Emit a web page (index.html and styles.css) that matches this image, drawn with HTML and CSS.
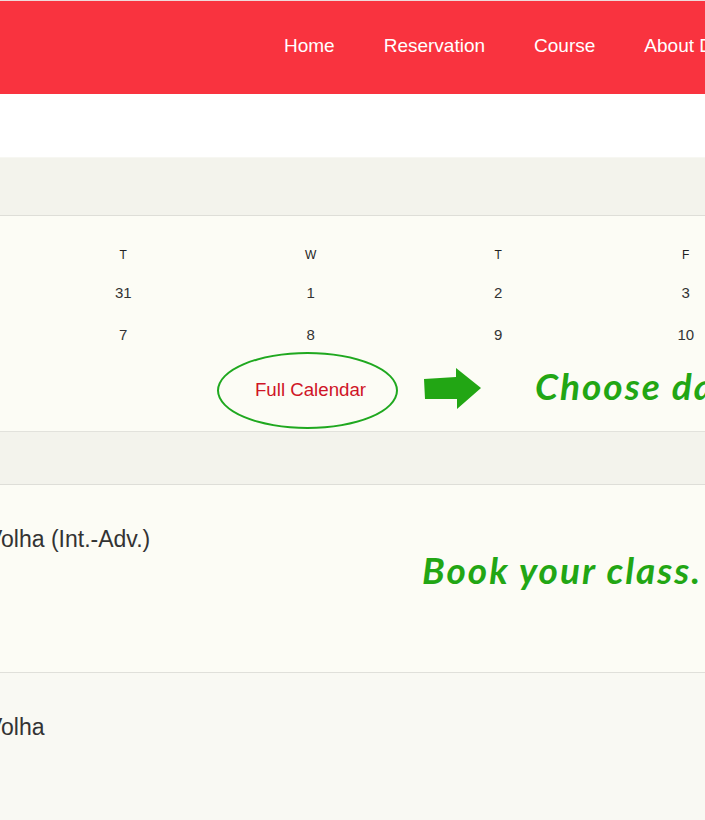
FILE: index.html
```html
<!DOCTYPE html>
<html lang="en">
<head>
    <meta charset="UTF-8">
    <meta name="viewport" content="width=device-width, initial-scale=1.0">
    <title>Reservation</title>
    <link rel="stylesheet" href="styles.css">
</head>
<body>

<div class="page">
    <header class="site-header">
        <nav class="main-nav">
            <a href="#">Home</a>
            <a href="#">Reservation</a>
            <a href="#">Course</a>
            <a href="#">About Dojo</a>
        </nav>
    </header>

    <div class="spacer"></div>

    <div class="band"></div>

    <section class="calendar">
        <div class="cal-grid">
            <div class="dow">M</div>
            <div class="dow">T</div>
            <div class="dow">W</div>
            <div class="dow">T</div>
            <div class="dow">F</div>
            <div class="dow">S</div>
            <div class="dow">S</div>

            <div class="day">30</div>
            <div class="day">31</div>
            <div class="day">1</div>
            <div class="day">2</div>
            <div class="day">3</div>
            <div class="day">4</div>
            <div class="day">5</div>

            <div class="day">6</div>
            <div class="day">7</div>
            <div class="day">8</div>
            <div class="day">9</div>
            <div class="day">10</div>
            <div class="day">11</div>
            <div class="day">12</div>

            <div class="cal-footer">
                <a href="#" class="full-cal">Full Calendar</a>
                <svg class="arrow" width="57" height="41" viewBox="0 0 57 41">
                    <polygon points="0,11 32,9 32,0 57,20 33,41 33,31 1,31" fill="#22a614"/>
                </svg>
                <span class="note">Choose date</span>
            </div>
        </div>
    </section>

    <div class="band band-small"></div>

    <section class="lesson">
        <div class="lesson-name">Volha (Int.-Adv.)</div>
        <span class="note note-book">Book your class.</span>
    </section>

    <section class="lesson lesson-alt">
        <div class="lesson-name">Volha</div>
    </section>
</div>

</body>
</html>
```

FILE: styles.css
```css
body {
    margin: 0;
    padding: 0;
    overflow: hidden;
    font-family: "Liberation Sans", Arial, sans-serif;
    color: #333;
    background: #fff;
}
.page {
    width: 1400px;
    margin-left: -158px;
}
.site-header {
    height: 93px;
    border-top: 1px solid #eedada;
    background-color: #f9333f;
    display: flex;
    align-items: center;
}
.main-nav {
    display: flex;
    gap: 49px;
    padding-left: 442px;
    padding-bottom: 4px;
}
.main-nav a {
    color: #fff;
    font-size: 19px;
    text-decoration: none;
    white-space: nowrap;
}
.spacer {
    height: 63px;
    border-bottom: 1px solid #f7f7f2;
}
.band {
    height: 57px;
    background-color: #f3f3ec;
    border-bottom: 1px solid #deded8;
}
.band-small {
    height: 52px;
    border-top: 1px solid #e2e2dc;
}
.calendar {
    background-color: #fcfcf5;
    padding: 23px 0 7px;
}
.cal-grid {
    display: grid;
    grid-template-columns: repeat(7, 187.5px);
}
.dow {
    height: 33px;
    line-height: 33px;
    text-align: center;
    font-size: 12px;
    color: #222;
}
.day {
    height: 42px;
    line-height: 42px;
    text-align: center;
    font-size: 15px;
    color: #333;
}
.cal-footer {
    grid-column: 3 / span 5;
    height: 68px;
    display: flex;
    align-items: center;
}
.full-cal {
    box-sizing: border-box;
    width: 181px;
    height: 77px;
    border: 2.5px solid #1fa81f;
    border-radius: 50%;
    display: flex;
    align-items: center;
    justify-content: center;
    color: #cf1426;
    font-size: 18.7px;
    text-decoration: none;
    padding-left: 6px;
}
.arrow {
    margin-left: 26px;
    margin-top: -4px;
}
.note {
    font-family: Lato, "Liberation Sans", sans-serif;
    font-weight: bold;
    font-style: italic;
    font-size: 37px;
    letter-spacing: 2px;
    color: #22a614;
    white-space: nowrap;
    margin-left: 54px;
    margin-top: -9px;
}
.lesson {
    position: relative;
    height: 187px;
    background-color: #fcfcf5;
    border-bottom: 1px solid #e0e0da;
}
.lesson-alt {
    background-color: #f9f9f3;
    border-bottom: none;
}
.lesson-name {
    padding: 40px 0 0 145px;
    font-size: 23px;
    line-height: 29px;
    color: #333;
}
.note-book {
    position: absolute;
    left: 580px;
    top: 62px;
    margin: 0;
}
```
